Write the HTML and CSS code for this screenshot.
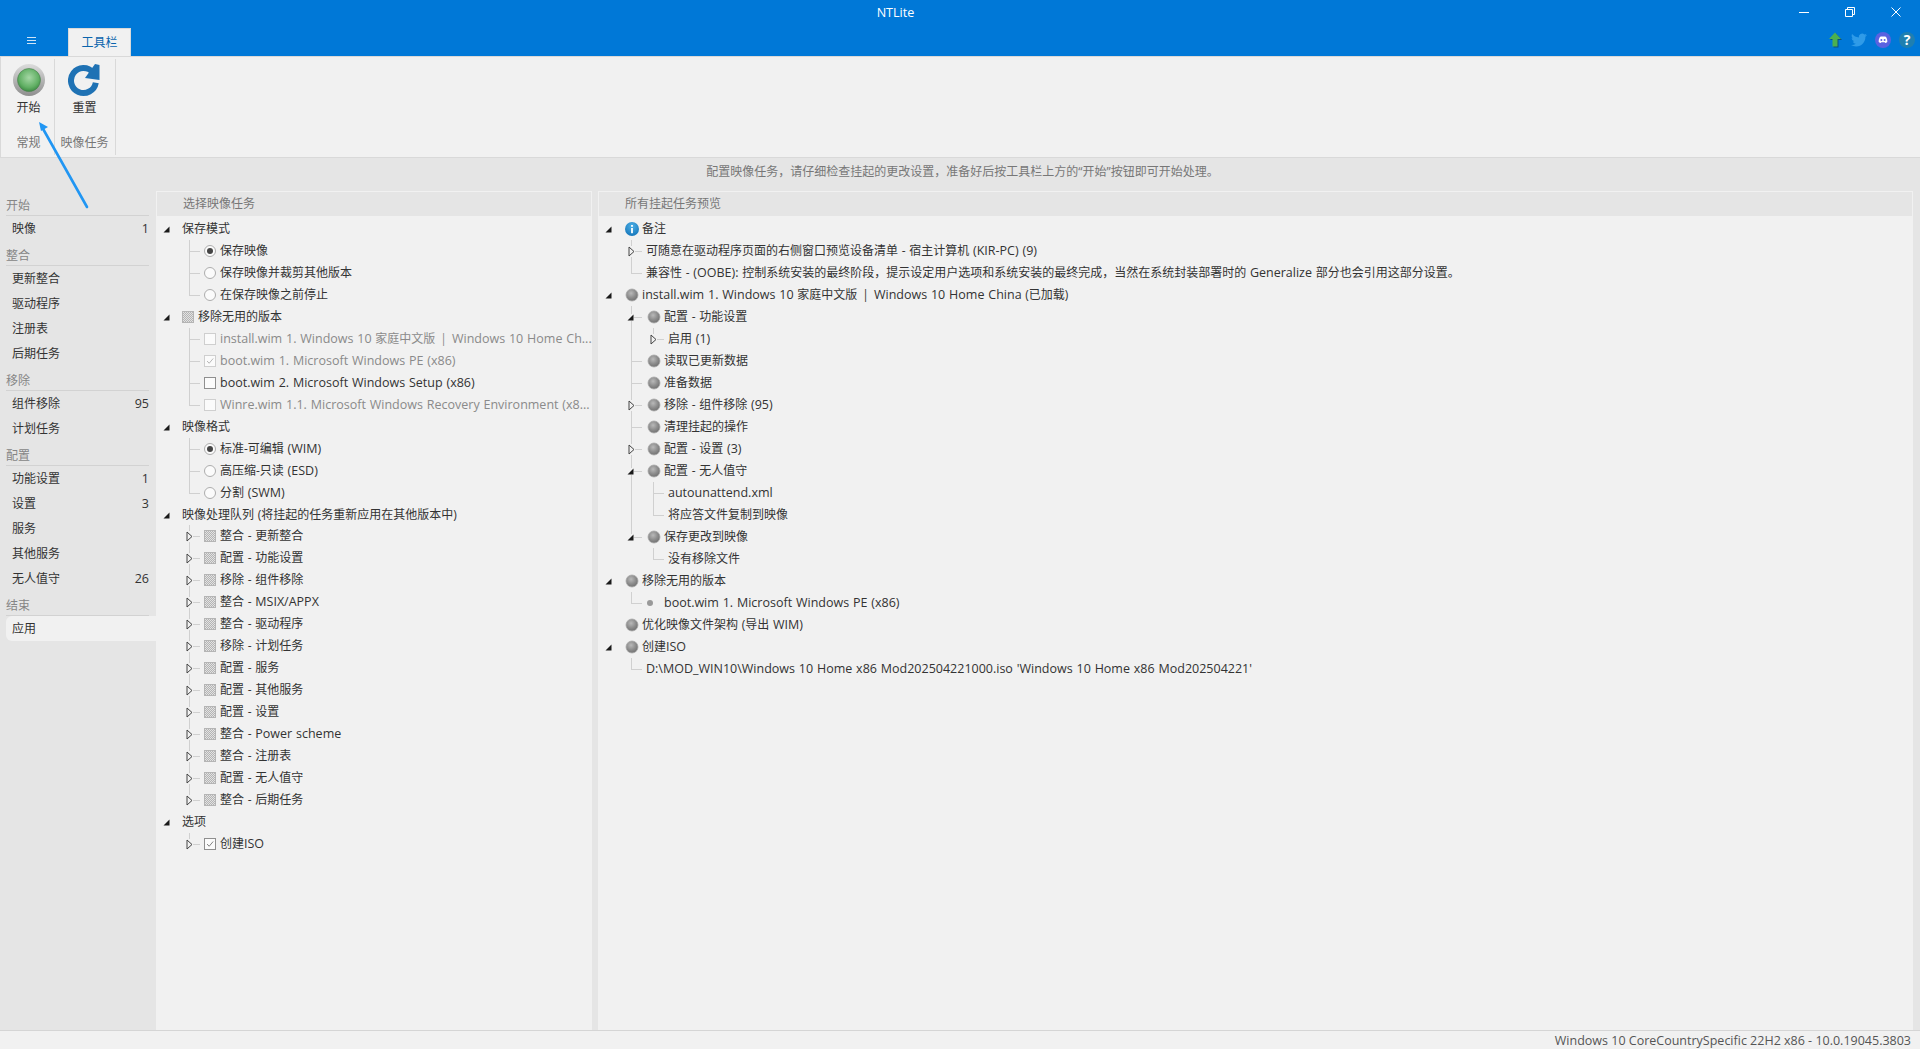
FILE: index.html
```html
<!DOCTYPE html>
<html lang="zh-CN">
<head>
<meta charset="utf-8">
<title>NTLite</title>
<link rel="stylesheet" href="styles.css">
</head>
<body>
<svg class="defs" width="0" height="0" aria-hidden="true">
  <defs>
    <symbol id="open" viewBox="0 0 7 7"><path d="M6.5 .5V6.5H.5Z" fill="#1a1a1a"/></symbol>
    <symbol id="shut" viewBox="0 0 7 11"><path d="M1 1L6 5.5L1 10Z" fill="#f1f1f1" stroke="#444" stroke-width="1"/></symbol>
    <symbol id="tick" viewBox="0 0 12 12"><path d="M2.5 6L5 8.7L9.8 3" fill="none" stroke="currentColor" stroke-width="1.1"/></symbol>
    <radialGradient id="ball" cx=".42" cy=".35" r=".7"><stop offset="0" stop-color="#b9b9b9"/><stop offset=".55" stop-color="#8d8d8d"/><stop offset="1" stop-color="#6e6e6e"/></radialGradient>
    <symbol id="orb" viewBox="0 0 14 14"><circle cx="7" cy="7" r="6" fill="url(#ball)" stroke="#a8a8a8" stroke-width=".8"/></symbol>
  </defs>
</svg>

<div class="app">
  <header class="titlebar">
    <div class="title-row">
      <div class="title">NTLite</div>
      <div class="winctl">
        <span class="wbtn"><svg width="10" height="10" viewBox="0 0 10 10"><path d="M0 5.5H10" stroke="#fff"/></svg></span>
        <span class="wbtn"><svg width="10" height="10" viewBox="0 0 10 10"><path d="M.5 2.5H7.5V9.5H.5ZM2.5 2.5V.5H9.5V7.5H7.5" fill="none" stroke="#fff"/></svg></span>
        <span class="wbtn"><svg width="10" height="10" viewBox="0 0 10 10"><path d="M.5 .5L9.5 9.5M9.5 .5L.5 9.5" stroke="#fff"/></svg></span>
      </div>
    </div>
    <div class="tab-row">
      <span class="burger"><svg width="9" height="9" viewBox="0 0 9 9"><path d="M0 1.5H9M0 4.5H9M0 7.5H9" stroke="#cfe4f7"/></svg></span>
      <span class="tab">工具栏</span>
      <div class="extlinks">
        <svg width="16" height="16" viewBox="0 0 16 16"><path d="M9 1.5L15 8H11.5V15.5H6.5V8H3Z" fill="#0c4f7e"/><path d="M8 .5L14 7H10.5V14.5H5.5V7H2Z" fill="#4cb050"/></svg>
        <svg width="16" height="16" viewBox="0 0 24 24"><path fill="#2f9be8" d="M23.953 4.57a10 10 0 01-2.825.775 4.958 4.958 0 002.163-2.723c-.951.555-2.005.959-3.127 1.184a4.92 4.92 0 00-8.384 4.482C7.69 8.095 4.067 6.13 1.64 3.162a4.822 4.822 0 00-.666 2.475c0 1.71.87 3.213 2.188 4.096a4.904 4.904 0 01-2.228-.616v.06a4.923 4.923 0 003.946 4.827 4.996 4.996 0 01-2.212.085 4.936 4.936 0 004.604 3.417 9.867 9.867 0 01-6.102 2.105c-.39 0-.779-.023-1.17-.067a13.995 13.995 0 007.557 2.209c9.053 0 13.998-7.496 13.998-13.985 0-.21 0-.42-.015-.63A9.935 9.935 0 0024 4.59z"/></svg>
        <svg width="16" height="16" viewBox="0 0 16 16"><circle cx="8" cy="8" r="8" fill="#5a62e0"/><path d="M4.9 4.9C6 4.4 6.7 4.3 7 4.5H9C9.3 4.3 10 4.4 11.1 4.9C12 6.4 12.4 8 12.3 9.9C11.6 10.5 10.9 10.8 10.2 11L9.7 10.2H6.3L5.8 11C5.1 10.8 4.4 10.5 3.7 9.9C3.6 8 4 6.4 4.9 4.9Z" fill="#fff"/><circle cx="6.4" cy="8" r="1" fill="#5a62e0"/><circle cx="9.6" cy="8" r="1" fill="#5a62e0"/></svg>
        <span class="help">?</span>
      </div>
    </div>
  </header>

  <section class="ribbon">
    <div class="rgroup rgroup-a">
      <div class="rbtn">
        <svg width="34" height="34" viewBox="0 0 34 34">
          <defs>
            <linearGradient id="rim" x1="0" y1="0" x2="0" y2="1"><stop offset="0" stop-color="#dcdcdc"/><stop offset="1" stop-color="#8e8e8e"/></linearGradient>
            <radialGradient id="lamp" cx=".5" cy=".4" r=".6"><stop offset="0" stop-color="#a5d7a5"/><stop offset=".7" stop-color="#62b065"/><stop offset="1" stop-color="#3f8c45"/></radialGradient>
          </defs>
          <circle cx="17" cy="17" r="16" fill="url(#rim)"/>
          <circle cx="17" cy="17" r="11.5" fill="url(#lamp)" stroke="#4b7d4f" stroke-width=".6"/>
        </svg>
        <span>开始</span>
      </div>
      <div class="rlabel">常规</div>
    </div>
    <div class="rgroup rgroup-b">
      <div class="rbtn">
        <svg width="34" height="34" viewBox="0 0 34 34">
          <path d="M25.1 9.5A12.5 12.5 0 1 0 27.8 19.7" fill="none" stroke="#1f72b4" stroke-width="6"/>
          <path d="M27 1L31.5 2V17L17 15Z" fill="#1f72b4"/>
        </svg>
        <span>重置</span>
      </div>
      <div class="rlabel">映像任务</div>
    </div>
  </section>

  <div class="infobar">配置映像任务，请仔细检查挂起的更改设置，准备好后按工具栏上方的“开始”按钮即可开始处理。</div>

  <main class="content">
    <nav class="sidebar">
      <div class="nav-head">开始</div>
      <div class="nav-item"><span>映像</span><span class="en">1</span></div>
      <div class="nav-head">整合</div>
      <div class="nav-item"><span>更新整合</span></div>
      <div class="nav-item"><span>驱动程序</span></div>
      <div class="nav-item"><span>注册表</span></div>
      <div class="nav-item"><span>后期任务</span></div>
      <div class="nav-head">移除</div>
      <div class="nav-item"><span>组件移除</span><span class="en">95</span></div>
      <div class="nav-item"><span>计划任务</span></div>
      <div class="nav-head">配置</div>
      <div class="nav-item"><span>功能设置</span><span class="en">1</span></div>
      <div class="nav-item"><span>设置</span><span class="en">3</span></div>
      <div class="nav-item"><span>服务</span></div>
      <div class="nav-item"><span>其他服务</span></div>
      <div class="nav-item"><span>无人值守</span><span class="en">26</span></div>
      <div class="nav-head">结束</div>
      <div class="nav-item active"><span>应用</span></div>
    </nav>

    <section class="panel panel-left">
      <div class="panel-head">选择映像任务</div>
      <div class="tree">
        <div class="row"><i class="c"><svg class="a-open"><use href="#open"/></svg></i><b class="t">保存模式</b></div>
        <div class="row"><i class="c"></i><i class="c tee"></i><u class="radio on"></u><b class="t">保存映像</b></div>
        <div class="row"><i class="c"></i><i class="c tee"></i><u class="radio"></u><b class="t">保存映像并裁剪其他版本</b></div>
        <div class="row"><i class="c"></i><i class="c ell"></i><u class="radio"></u><b class="t">在保存映像之前停止</b></div>

        <div class="row"><i class="c"><svg class="a-open"><use href="#open"/></svg></i><u class="box mix"></u><b class="t">移除无用的版本</b></div>
        <div class="row off"><i class="c"></i><i class="c tee"></i><u class="box"></u><b class="t"><span class="en">install.wim 1. Windows 10</span> 家庭中文版<span class="sep">|</span><span class="en">Windows 10 Home Ch...</span></b></div>
        <div class="row off"><i class="c"></i><i class="c tee"></i><u class="box"><svg class="tick"><use href="#tick"/></svg></u><b class="t"><span class="en">boot.wim 1. Microsoft Windows PE (x86)</span></b></div>
        <div class="row"><i class="c"></i><i class="c tee"></i><u class="box dark"></u><b class="t"><span class="en">boot.wim 2. Microsoft Windows Setup (x86)</span></b></div>
        <div class="row off"><i class="c"></i><i class="c ell"></i><u class="box"></u><b class="t"><span class="en">Winre.wim 1.1. Microsoft Windows Recovery Environment (x8...</span></b></div>

        <div class="row"><i class="c"><svg class="a-open"><use href="#open"/></svg></i><b class="t">映像格式</b></div>
        <div class="row"><i class="c"></i><i class="c tee"></i><u class="radio on"></u><b class="t">标准-可编辑 <span class="en">(WIM)</span></b></div>
        <div class="row"><i class="c"></i><i class="c tee"></i><u class="radio"></u><b class="t">高压缩-只读 <span class="en">(ESD)</span></b></div>
        <div class="row"><i class="c"></i><i class="c ell"></i><u class="radio"></u><b class="t">分割 <span class="en">(SWM)</span></b></div>

        <div class="row"><i class="c"><svg class="a-open"><use href="#open"/></svg></i><b class="t">映像处理队列 (将挂起的任务重新应用在其他版本中)</b></div>
        <div class="row nudge"><i class="c"></i><i class="c tee"><svg class="a-shut"><use href="#shut"/></svg></i><u class="box mix"></u><b class="t">整合 - 更新整合</b></div>
        <div class="row"><i class="c"></i><i class="c tee"><svg class="a-shut"><use href="#shut"/></svg></i><u class="box mix"></u><b class="t">配置 - 功能设置</b></div>
        <div class="row"><i class="c"></i><i class="c tee"><svg class="a-shut"><use href="#shut"/></svg></i><u class="box mix"></u><b class="t">移除 - 组件移除</b></div>
        <div class="row"><i class="c"></i><i class="c tee"><svg class="a-shut"><use href="#shut"/></svg></i><u class="box mix"></u><b class="t">整合 - <span class="en">MSIX/APPX</span></b></div>
        <div class="row"><i class="c"></i><i class="c tee"><svg class="a-shut"><use href="#shut"/></svg></i><u class="box mix"></u><b class="t">整合 - 驱动程序</b></div>
        <div class="row"><i class="c"></i><i class="c tee"><svg class="a-shut"><use href="#shut"/></svg></i><u class="box mix"></u><b class="t">移除 - 计划任务</b></div>
        <div class="row"><i class="c"></i><i class="c tee"><svg class="a-shut"><use href="#shut"/></svg></i><u class="box mix"></u><b class="t">配置 - 服务</b></div>
        <div class="row"><i class="c"></i><i class="c tee"><svg class="a-shut"><use href="#shut"/></svg></i><u class="box mix"></u><b class="t">配置 - 其他服务</b></div>
        <div class="row"><i class="c"></i><i class="c tee"><svg class="a-shut"><use href="#shut"/></svg></i><u class="box mix"></u><b class="t">配置 - 设置</b></div>
        <div class="row"><i class="c"></i><i class="c tee"><svg class="a-shut"><use href="#shut"/></svg></i><u class="box mix"></u><b class="t">整合 - <span class="en">Power scheme</span></b></div>
        <div class="row"><i class="c"></i><i class="c tee"><svg class="a-shut"><use href="#shut"/></svg></i><u class="box mix"></u><b class="t">整合 - 注册表</b></div>
        <div class="row"><i class="c"></i><i class="c tee"><svg class="a-shut"><use href="#shut"/></svg></i><u class="box mix"></u><b class="t">配置 - 无人值守</b></div>
        <div class="row"><i class="c"></i><i class="c ell"><svg class="a-shut"><use href="#shut"/></svg></i><u class="box mix"></u><b class="t">整合 - 后期任务</b></div>

        <div class="row"><i class="c"><svg class="a-open"><use href="#open"/></svg></i><b class="t">选项</b></div>
        <div class="row"><i class="c"></i><i class="c ell"><svg class="a-shut"><use href="#shut"/></svg></i><u class="box"><svg class="tick strong"><use href="#tick"/></svg></u><b class="t">创建<span class="en">ISO</span></b></div>
      </div>
    </section>

    <section class="panel panel-right">
      <div class="panel-head">所有挂起任务预览</div>
      <div class="tree">
        <div class="row"><i class="c"><svg class="a-open"><use href="#open"/></svg></i><svg class="orb" viewBox="0 0 14 14"><defs><radialGradient id="infob" cx=".5" cy=".3" r=".8"><stop offset="0" stop-color="#4fb0e6"/><stop offset="1" stop-color="#0d6fb5"/></radialGradient></defs><circle cx="7" cy="7" r="7" fill="url(#infob)"/><rect x="6.1" y="6" width="1.8" height="5.2" fill="#fff"/><rect x="6.1" y="3" width="1.8" height="1.8" fill="#fff"/></svg><b class="t">备注</b></div>
        <div class="row"><i class="c"></i><i class="c tee"><svg class="a-shut"><use href="#shut"/></svg></i><b class="t">可随意在驱动程序页面的右侧窗口预览设备清单 - 宿主计算机 <span class="en">(KIR-PC) (9)</span></b></div>
        <div class="row"><i class="c"></i><i class="c ell"></i><b class="t">兼容性 - <span class="en">(OOBE):</span> 控制系统安装的最终阶段，提示设定用户选项和系统安装的最终完成，当然在系统封装部署时的 <span class="en">Generalize</span> 部分也会引用这部分设置。</b></div>

        <div class="row"><i class="c"><svg class="a-open"><use href="#open"/></svg></i><svg class="orb"><use href="#orb"/></svg><b class="t"><span class="en">install.wim 1. Windows 10</span> 家庭中文版<span class="sep">|</span><span class="en">Windows 10 Home China</span> (已加载)</b></div>
        <div class="row"><i class="c"></i><i class="c tee"><svg class="a-open"><use href="#open"/></svg></i><svg class="orb"><use href="#orb"/></svg><b class="t">配置 - 功能设置</b></div>
        <div class="row"><i class="c"></i><i class="c bar"></i><i class="c ell"><svg class="a-shut"><use href="#shut"/></svg></i><b class="t">启用 <span class="en">(1)</span></b></div>
        <div class="row"><i class="c"></i><i class="c tee"></i><svg class="orb"><use href="#orb"/></svg><b class="t">读取已更新数据</b></div>
        <div class="row"><i class="c"></i><i class="c tee"></i><svg class="orb"><use href="#orb"/></svg><b class="t">准备数据</b></div>
        <div class="row"><i class="c"></i><i class="c tee"><svg class="a-shut"><use href="#shut"/></svg></i><svg class="orb"><use href="#orb"/></svg><b class="t">移除 - 组件移除 <span class="en">(95)</span></b></div>
        <div class="row"><i class="c"></i><i class="c tee"></i><svg class="orb"><use href="#orb"/></svg><b class="t">清理挂起的操作</b></div>
        <div class="row"><i class="c"></i><i class="c tee"><svg class="a-shut"><use href="#shut"/></svg></i><svg class="orb"><use href="#orb"/></svg><b class="t">配置 - 设置 <span class="en">(3)</span></b></div>
        <div class="row"><i class="c"></i><i class="c tee"><svg class="a-open"><use href="#open"/></svg></i><svg class="orb"><use href="#orb"/></svg><b class="t">配置 - 无人值守</b></div>
        <div class="row"><i class="c"></i><i class="c bar"></i><i class="c tee"></i><b class="t"><span class="en">autounattend.xml</span></b></div>
        <div class="row"><i class="c"></i><i class="c bar"></i><i class="c ell"></i><b class="t">将应答文件复制到映像</b></div>
        <div class="row"><i class="c"></i><i class="c ell"><svg class="a-open"><use href="#open"/></svg></i><svg class="orb"><use href="#orb"/></svg><b class="t">保存更改到映像</b></div>
        <div class="row"><i class="c"></i><i class="c"></i><i class="c ell"></i><b class="t">没有移除文件</b></div>

        <div class="row"><i class="c"><svg class="a-open"><use href="#open"/></svg></i><svg class="orb"><use href="#orb"/></svg><b class="t">移除无用的版本</b></div>
        <div class="row"><i class="c"></i><i class="c ell"></i><span class="dotcell"><em class="dot"></em></span><b class="t"><span class="en">boot.wim 1. Microsoft Windows PE (x86)</span></b></div>
        <div class="row"><i class="c"></i><svg class="orb"><use href="#orb"/></svg><b class="t">优化映像文件架构 (导出 <span class="en">WIM)</span></b></div>
        <div class="row"><i class="c"><svg class="a-open"><use href="#open"/></svg></i><svg class="orb"><use href="#orb"/></svg><b class="t">创建<span class="en">ISO</span></b></div>
        <div class="row"><i class="c"></i><i class="c ell"></i><b class="t"><span class="en">D:\MOD_WIN10\Windows 10 Home x86 Mod202504221000.iso 'Windows 10 Home x86 Mod202504221'</span></b></div>
      </div>
    </section>
  </main>

  <footer class="status">Windows 10 CoreCountrySpecific 22H2 x86 - 10.0.19045.3803</footer>
</div>

<svg class="callout" width="100" height="100" viewBox="0 0 100 100" aria-hidden="true">
  <path d="M87 107L42 27" stroke="#2196f3" stroke-width="2.6" stroke-linecap="round" fill="none"/>
  <path d="M39 22L48 27L41 31Z" fill="#2196f3"/>
</svg>
</body>
</html>
```
FILE: styles.css
```css
* { box-sizing: border-box; }
html, body { margin: 0; height: 100%; overflow: hidden; }
body {
  font-family: "Open Sans", "Noto Sans CJK SC", sans-serif;
  font-size: 12px;
  color: #333;
  background: #e5e5e5;
}
.defs { position: absolute; }
.app { display: flex; flex-direction: column; height: 1049px; }
.en { font-size: 12.5px; }
.sep { margin: 0 5px; }

/* title bar */
.titlebar { height: 56px; background: #0078d7; color: #fff; flex: none; }
.title-row { display: flex; height: 28px; }
.title { flex: 1; padding: 4px 0 0 10px; text-align: center; line-height: 18px; font-size: 12.6px; }
.winctl { display: flex; padding-right: 1px; }
.wbtn { width: 46px; height: 24px; display: flex; align-items: center; justify-content: center; }
.tab-row { display: flex; height: 28px; align-items: flex-end; }
.burger { width: 68px; height: 28px; padding: 8px 5px 0 0; display: flex; justify-content: center; }
.tab {
  width: 63px; height: 28px; padding-top: 4px;
  background: #f1f1f1; border: 1px solid #d9d9d9; border-bottom: 0;
  color: #0a64ad; text-align: center; line-height: 20px;
}
.extlinks { margin-left: auto; height: 28px; display: flex; gap: 8px; padding: 4px 5px 0 0; }
.help {
  width: 16px; height: 16px; border-radius: 50%; background: #1f7fb0;
  color: #fff; font-weight: 700; font-size: 14px; line-height: 16px; text-align: center;
}

/* ribbon */
.ribbon {
  height: 102px; flex: none; display: flex;
  background: #f1f1f1;
  border-left: 1px solid #d9d9d9;
  border-bottom: 1px solid #d9d9d9;
  border-top: 1px solid #d9d9d9;
}
.rgroup { display: flex; flex-direction: column; align-items: center; padding-top: 6px; margin: 2px 0; border-right: 1px solid #d9d9d9; }
.rgroup-a { width: 54px; padding-left: 2px; }
.rgroup-b { width: 61px; padding-right: 1px; }
.rbtn { height: 70px; display: flex; flex-direction: column; align-items: center; margin-top: -2px; }
.rbtn span { margin-top: 2px; line-height: 18px; }
.rlabel { color: #777; line-height: 18px; margin-top: 1px; }

.infobar { height: 33px; flex: none; padding: 5px 0 0 5px; line-height: 18px; text-align: center; color: #777; }

/* content */
.content { flex: 1; min-height: 0; display: flex; }
.sidebar { width: 156px; flex: none; padding-left: 6px; }
.nav-head {
  height: 25px; margin-right: 7px; padding-top: 6px; line-height: 18px;
  color: #858585; border-bottom: 1px solid #d2d2d2;
}
.nav-item { height: 25px; display: flex; justify-content: space-between; align-items: center; padding: 0 7px 1px 6px; }
.nav-item.active { background: #f1f1f1; border-radius: 6px 0 0 6px; }

.panel { background: #f1f1f1; border: 1px solid #f1f1f1; border-bottom: 0; display: flex; flex-direction: column; }
.panel-left { width: 436px; flex: none; margin-right: 6px; }
.panel-right { width: 1315px; flex: none; }
.panel-head { height: 24px; flex: none; background: #e5e5e5; padding-left: 26px; line-height: 24px; color: #777; }
.tree { padding-top: 2px; margin-left: -1px; }

.row { height: 22px; display: flex; align-items: center; white-space: nowrap; }
.row.nudge { margin-top: -1px; }
.row.off { color: #8a8a8a; }
.t { font-weight: 400; line-height: 22px; margin-left: 4px; word-spacing: .6px; }

/* tree guide cells: 22px wide, line through the centre */
.c { display: flex; flex: none; width: 22px; height: 22px; align-items: center; justify-content: center; }
.tee, .ell, .bar { background-repeat: no-repeat; }
.tee { background-image: linear-gradient(#d0d0d0, #d0d0d0), linear-gradient(#d0d0d0, #d0d0d0); background-size: 1px 22px, 11px 1px; background-position: 11px 0, 11px 11px; }
.ell { background-image: linear-gradient(#d0d0d0, #d0d0d0), linear-gradient(#d0d0d0, #d0d0d0); background-size: 1px 12px, 11px 1px; background-position: 11px 0, 11px 11px; }
.bar { background-image: linear-gradient(#d0d0d0, #d0d0d0); background-size: 1px 22px; background-position: 11px 0; }

.a-open { width: 7px; height: 7px; margin: 1px 1px 0 0; background: #f1f1f1; }
.a-shut { width: 7px; height: 11px; background: #f1f1f1; }

/* controls */
.radio, .box { flex: none; width: 12px; height: 12px; margin-left: 4px; background: #fbfbfb; display: block; text-decoration: none; }
.radio { border: 1px solid #adadad; border-radius: 50%; display: flex; align-items: center; justify-content: center; }
.radio.on::after { content: ""; width: 6px; height: 6px; border-radius: 50%; background: #444; }
.box { border: 1px solid #cfcfcf; }
.box.dark { border-color: #8f8f8f; }
.box.mix {
  border-color: #b5b5b5;
  background: repeating-conic-gradient(#b4b4b4 0 25%, #e2e2e2 0 50%) 0 0 / 2px 2px;
}
.tick { width: 10px; height: 10px; display: block; color: #b0b0b0; }
.tick.strong { color: #777; }
.row .box:has(.strong) { border-color: #8f8f8f; }

.orb { flex: none; width: 14px; height: 14px; margin: 0 -1px 0 5px; }
.dotcell { width: 14px; margin-left: 4px; display: flex; align-items: center; }
.dot { width: 6px; height: 6px; margin-left: 1px; border-radius: 50%; background: #999; }

.status {
  height: 19px; flex: none; background: #f1f1f1; border-top: 1px solid #d5d5d5;
  text-align: right; padding-right: 9px; line-height: 20px; color: #555; font-size: 12.5px;
}

/* annotation drawn on top of the screenshot */
.callout { position: absolute; left: 0; top: 100px; overflow: visible; pointer-events: none; }
```
